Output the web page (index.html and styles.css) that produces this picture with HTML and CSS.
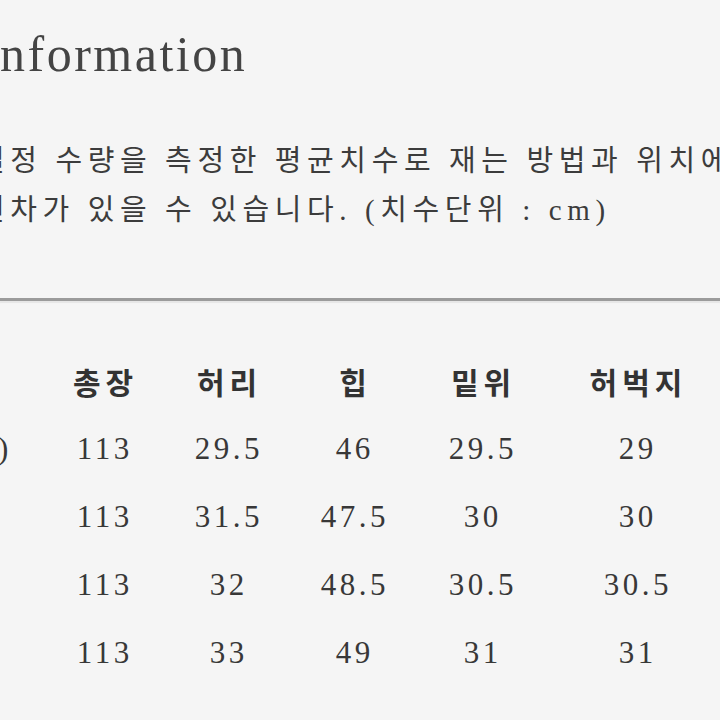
FILE: index.html
```
<!DOCTYPE html>
<html lang="ko">
<head>
<meta charset="utf-8">
<title>Size Information</title>
<link rel="stylesheet" href="styles.css">
</head>
<body>
<div class="page">
  <h1 class="title"><span class="clip">Size I</span>nformation</h1>
  <p class="note">일정 수량을 측정한 평균치수로 재는 방법과 위치에<br>편차가 있을 수 있습니다. (치수단위 : cm)</p>
  <div class="rule"></div>
  <div class="table">
    <div class="cell head">사이즈</div>
    <div class="cell head">총장</div>
    <div class="cell head">허리</div>
    <div class="cell head">힙</div>
    <div class="cell head">밑위</div>
    <div class="cell head">허벅지</div>

    <div class="cell">XS(25)</div>
    <div class="cell">113</div>
    <div class="cell">29.5</div>
    <div class="cell">46</div>
    <div class="cell">29.5</div>
    <div class="cell">29</div>

    <div class="cell">S</div>
    <div class="cell">113</div>
    <div class="cell">31.5</div>
    <div class="cell">47.5</div>
    <div class="cell">30</div>
    <div class="cell">30</div>

    <div class="cell">M</div>
    <div class="cell">113</div>
    <div class="cell">32</div>
    <div class="cell">48.5</div>
    <div class="cell">30.5</div>
    <div class="cell">30.5</div>

    <div class="cell">L</div>
    <div class="cell">113</div>
    <div class="cell">33</div>
    <div class="cell">49</div>
    <div class="cell">31</div>
    <div class="cell">31</div>
  </div>
</div>
</body>
</html>
```
FILE: styles.css
```
html, body {
  margin: 0;
  padding: 0;
  background: #f5f5f5;
}

.page {
  width: 720px;
  height: 720px;
  overflow: hidden;
  background: #f5f5f5;
  color: #3a3a3a;
  font-family: "Liberation Serif", "Noto Sans CJK KR", serif;
}

.title {
  margin: 0;
  padding-top: 29px;
  font-size: 50px;
  line-height: 50px;
  font-weight: normal;
  letter-spacing: 2.5px;
  color: #444;
  white-space: nowrap;
}

.clip {
  display: inline-block;
  width: 0;
  direction: rtl;
  white-space: nowrap;
}

.note {
  margin: 58px 0 0 -22px;
  font-size: 29px;
  line-height: 49px;
  letter-spacing: 5.6px;
  color: #3c3c3c;
  white-space: nowrap;
}

.rule {
  margin-top: 63px;
  height: 3px;
  background: #9b9b9b;
  box-shadow: 0 2px 1px #e6e6e6;
}

.table {
  margin-top: 46px;
  margin-left: -120px;
  display: grid;
  grid-template-columns: 148px 150px 98px 154px 102px 208px;
  grid-auto-rows: 68px;
}

.cell {
  text-align: center;
  font-size: 31px;
  line-height: 68px;
  letter-spacing: 3.5px;
  padding-left: 3.5px;
  color: #383838;
  white-space: nowrap;
}

.head {
  font-family: "Noto Sans CJK KR", sans-serif;
  font-size: 30px;
  font-weight: 700;
  letter-spacing: 5px;
  padding-left: 5px;
  color: #333;
}
```
